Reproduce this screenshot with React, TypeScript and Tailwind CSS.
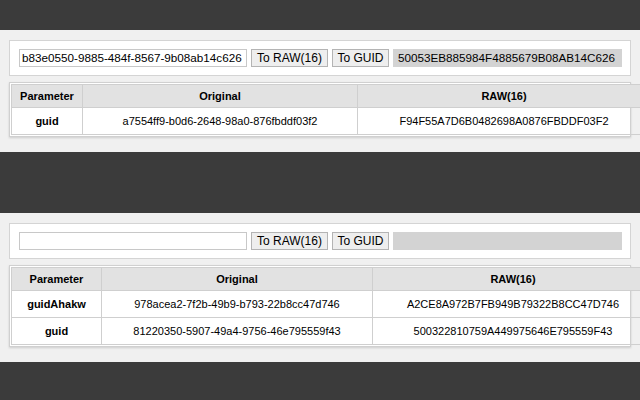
const panels = [
  {
    input: 'b83e0550-9885-484f-8567-9b08ab14c626',
    output: '50053EB885984F4885679B08AB14C626',
    width: 'w-[639px]',
    cols: ['w-[71px]', 'w-[275px]', 'w-[293px]'],
    rows: [
      { name: 'guid', original: 'a7554ff9-b0d6-2648-98a0-876fbddf03f2', raw: 'F94F55A7D6B0482698A0876FBDDF03F2' },
    ],
  },
  {
    input: '',
    output: '',
    width: 'w-[642px]',
    cols: ['w-[90px]', 'w-[271px]', 'w-[281px]'],
    rows: [
      { name: 'guidAhakw', original: '978acea2-7f2b-49b9-b793-22b8cc47d746', raw: 'A2CE8A972B7FB949B79322B8CC47D746' },
      { name: 'guid', original: '81220350-5907-49a4-9756-46e795559f43', raw: '500322810759A449975646E795559F43' },
    ],
  },
]

type Panel = (typeof panels)[number]

function Converter({ panel }: { panel: Panel }) {
  return (
    <div className="bg-[#f0f0f0] px-[9px] pt-[10px] pb-[15px]">
      <div className="flex h-[36px] w-[622px] items-center gap-[4px] border border-[#d4d4d4] bg-white pl-[9px]">
        <div className="flex h-[18px] w-[228px] items-center overflow-hidden whitespace-nowrap border border-[#c8c8c8] px-[2px] text-[11.7px] text-black">
          {panel.input}
        </div>
        <button className="h-[18px] w-[77px] border border-[#b4b4b4] bg-[#eeeeee] text-[12px] leading-none text-black">
          To RAW(16)
        </button>
        <button className="h-[18px] w-[57px] border border-[#b4b4b4] bg-[#eeeeee] text-[12px] leading-none text-black">
          To GUID
        </button>
        <div className="flex h-[18px] w-[229px] items-center overflow-hidden whitespace-nowrap bg-[#d3d3d3] px-[5px] text-[11.7px] text-black">
          {panel.output}
        </div>
      </div>
      <div className="mt-[6px] w-[622px] border border-[#d0d0d0] bg-white p-[1px] shadow-[0_1px_2px_rgba(0,0,0,0.15)]">
        <table className={`${panel.width} table-fixed border-collapse text-[11px] text-black`}>
          <thead>
            <tr className="h-[23px] bg-[#e2e2e2]">
              <th className={`${panel.cols[0]} border border-[#cfcfcf] font-bold`}>Parameter</th>
              <th className={`${panel.cols[1]} border border-[#cfcfcf] font-bold`}>Original</th>
              <th className={`${panel.cols[2]} border border-[#cfcfcf] font-bold`}>RAW(16)</th>
            </tr>
          </thead>
          <tbody>
            {panel.rows.map((r) => (
              <tr key={r.name} className="h-[27px]">
                <td className="border border-[#cfcfcf] text-center font-bold">{r.name}</td>
                <td className="border border-[#cfcfcf] text-center">{r.original}</td>
                <td className="border border-[#cfcfcf] text-center">{r.raw}</td>
              </tr>
            ))}
          </tbody>
        </table>
      </div>
    </div>
  )
}

export default function App() {
  return (
    <div className="h-[400px] w-[640px] overflow-hidden bg-[#3b3b3b] font-['Liberation_Sans',Arial,sans-serif]">
      <div className="h-[30px]" />
      <Converter panel={panels[0]} />
      <div className="h-[61px]" />
      <Converter panel={panels[1]} />
    </div>
  )
}
